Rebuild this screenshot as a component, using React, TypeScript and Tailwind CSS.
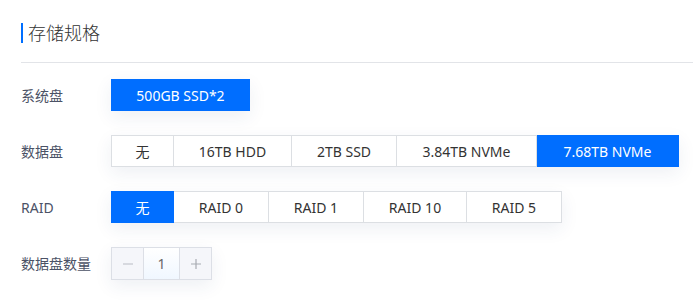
import React from "react";

const font = { fontFamily: '"Noto Sans", "Noto Sans CJK SC", sans-serif' };

type Opt = { label: string; w: string };

function Segmented({ opts, active }: { opts: Opt[]; active: number }) {
  return (
    <div className="flex h-[32px] shadow-[0_6px_18px_rgba(40,60,110,0.08)]">
      {opts.map((o, i) => {
        const sel = i === active;
        return (
          <div
            key={o.label}
            className={`${o.w} flex items-center justify-center text-[14px] border-y border-r ${
              i === 0 ? "border-l" : ""
            } ${
              sel
                ? "bg-[#006eff] border-[#006eff] text-white"
                : "bg-white border-[#dcdfe3] text-[#333]"
            }`}
          >
            {o.label}
          </div>
        );
      })}
    </div>
  );
}

function Row({ label, children }: { label: string; children: React.ReactNode }) {
  return (
    <div className="flex items-center h-[32px]">
      <div className="w-[90px] text-[14px] text-[#4b5266]">{label}</div>
      {children}
    </div>
  );
}

export default function App() {
  return (
    <div className="w-[693px] h-[304px] bg-white pl-[21px] pt-[23px] overflow-hidden" style={font}>
      <div className="flex items-center h-[20px]">
        <div className="w-[2px] h-[20px] bg-[#006eff]" />
        <div className="ml-[5px] text-[18px] leading-[20px] text-[#333] font-light">存储规格</div>
      </div>
      <div className="mt-[19px] h-px bg-[#e2e4e8]" />
      <div className="mt-[16px] flex flex-col gap-[24px]">
        <Row label="系统盘">
          <div className="w-[139px] h-[32px] flex items-center justify-center bg-[#006eff] text-white text-[14px] shadow-[0_6px_18px_rgba(40,60,110,0.08)]">
            500GB SSD*2
          </div>
        </Row>
        <Row label="数据盘">
          <Segmented
            active={4}
            opts={[
              { label: "无", w: "w-[63px]" },
              { label: "16TB HDD", w: "w-[118px]" },
              { label: "2TB SSD", w: "w-[105px]" },
              { label: "3.84TB NVMe", w: "w-[140px]" },
              { label: "7.68TB NVMe", w: "w-[142px]" },
            ]}
          />
        </Row>
        <Row label="RAID">
          <Segmented
            active={0}
            opts={[
              { label: "无", w: "w-[63px]" },
              { label: "RAID 0", w: "w-[95px]" },
              { label: "RAID 1", w: "w-[95px]" },
              { label: "RAID 10", w: "w-[103px]" },
              { label: "RAID 5", w: "w-[95px]" },
            ]}
          />
        </Row>
        <div className="flex items-center h-[33px]">
          <div className="w-[90px] text-[14px] text-[#4b5266]">数据盘数量</div>
          <div className="flex h-[33px] border border-[#dcdfe6] shadow-[0_6px_18px_rgba(40,60,110,0.08)]">
            <div className="w-[31px] flex items-center justify-center bg-[#f5f6fa] text-[#c0c4cc]">
              <svg width="12" height="12" viewBox="0 0 12 12">
                <path d="M1 6h10" stroke="#c3c6cd" strokeWidth="1.2" />
              </svg>
            </div>
            <div className="w-[37px] flex items-center justify-center border-x border-[#dcdfe6] bg-gradient-to-b from-white to-[#f0f7ff] text-[14px] text-[#666]">
              1
            </div>
            <div className="w-[31px] flex items-center justify-center bg-[#f5f6fa]">
              <svg width="12" height="12" viewBox="0 0 12 12">
                <path d="M1 6h10M6 1v10" stroke="#a8abb2" strokeWidth="1.2" />
              </svg>
            </div>
          </div>
        </div>
      </div>
    </div>
  );
}
